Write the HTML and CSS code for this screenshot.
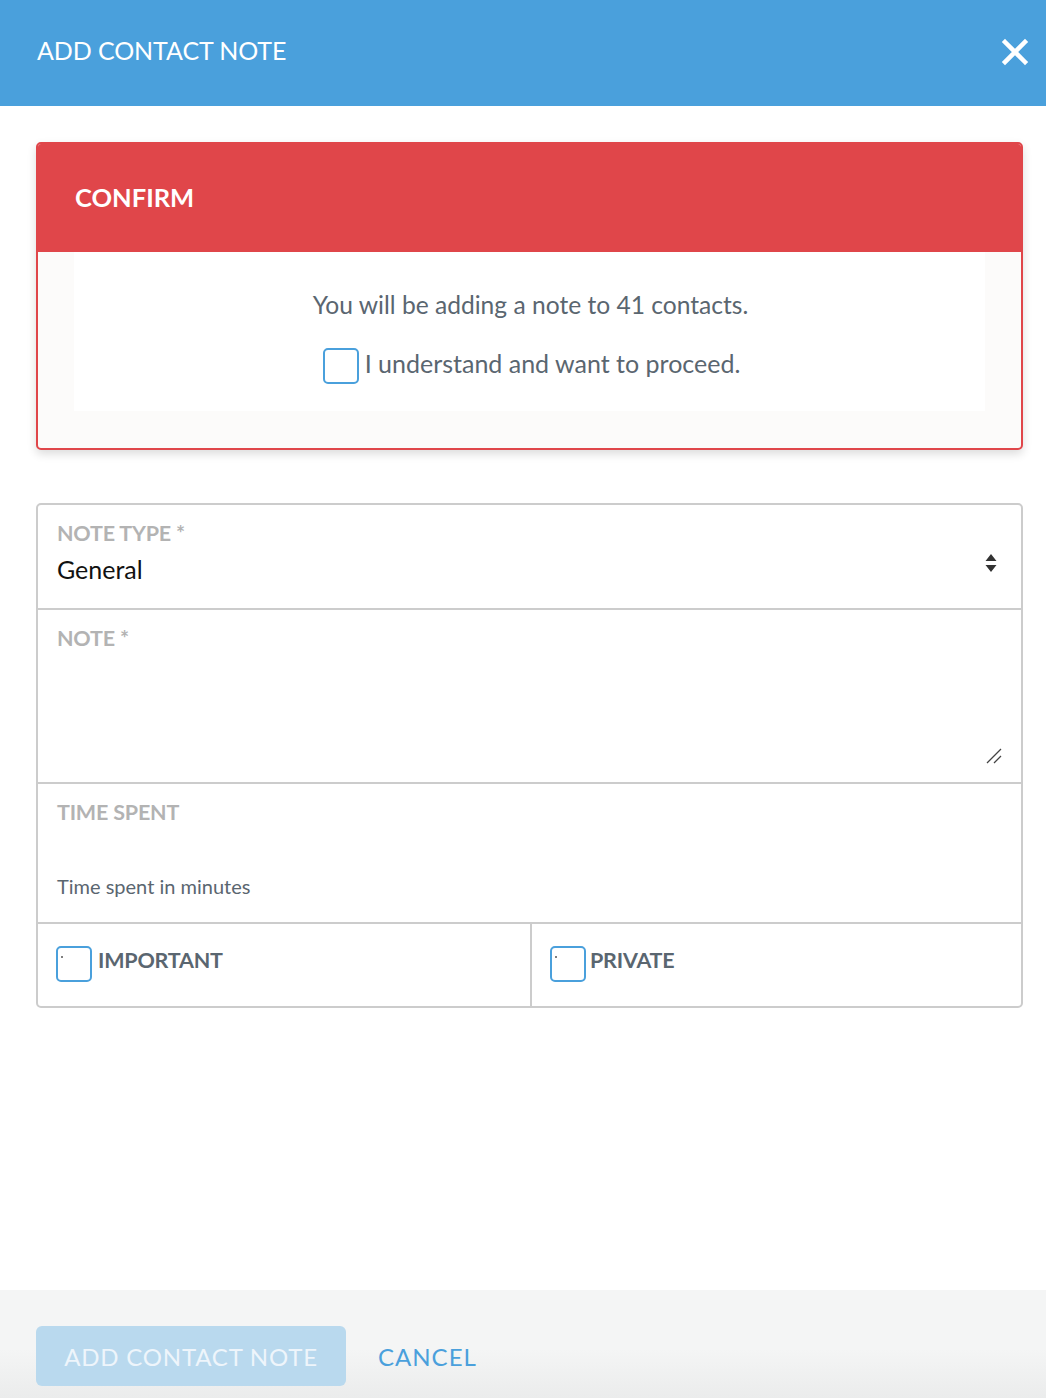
FILE: index.html
```html
<!DOCTYPE html>
<html>
<head>
<meta charset="utf-8">
<link rel="stylesheet" href="styles.css">
</head>
<body>
<div class="modal">
  <header class="topbar">
    <h1 class="title">ADD CONTACT NOTE</h1>
    <button class="close" aria-label="Close">
      <svg width="28" height="28" viewBox="0 0 28 28"><path d="M4 4 L24 24 M24 4 L4 24" stroke="#fff" stroke-width="4.5" stroke-linecap="square"/></svg>
    </button>
  </header>

  <main class="content">
    <section class="confirm">
      <div class="confirm-head">CONFIRM</div>
      <div class="confirm-body">
        <div class="confirm-inner">
          <p class="confirm-text">You will be adding a note to 41 contacts.</p>
          <label class="confirm-check"><span class="box"></span><span class="confirm-label">I understand and want to proceed.</span></label>
        </div>
      </div>
    </section>

    <section class="form">
      <div class="row row-type">
        <div class="label">NOTE TYPE *</div>
        <div class="select">
          <span class="value">General</span>
          <svg class="arrows" width="12" height="20" viewBox="0 0 12 20"><path d="M6 1 L11.5 8 L0.5 8 Z M6 19 L11.5 12 L0.5 12 Z" fill="#333"/></svg>
        </div>
      </div>
      <div class="row row-note">
        <div class="label">NOTE *</div>
        <svg class="resize" width="16" height="16" viewBox="0 0 16 16"><path d="M1 15 L15 1 M8 15 L15 8" stroke="#444" stroke-width="1.3"/></svg>
      </div>
      <div class="row row-time">
        <div class="label">TIME SPENT</div>
        <div class="placeholder">Time spent in minutes</div>
      </div>
      <div class="row row-checks">
        <label class="check-cell"><span class="box small-dot"></span><span class="check-label">IMPORTANT</span></label>
        <label class="check-cell"><span class="box small-dot"></span><span class="check-label">PRIVATE</span></label>
      </div>
    </section>
  </main>

  <footer class="footer">
    <button class="primary">ADD CONTACT NOTE</button>
    <button class="cancel">CANCEL</button>
  </footer>
</div>
</body>
</html>
```
FILE: styles.css
```css
* { box-sizing: border-box; }
html, body { margin: 0; padding: 0; }
body {
  font-family: Lato, "Open Sans", "Liberation Sans", sans-serif;
  background: #fff;
  width: 1046px;
  height: 1398px;
  overflow: hidden;
}
.modal {
  display: flex;
  flex-direction: column;
  height: 1398px;
}
.topbar {
  height: 106px;
  background: #4aa0dc;
  display: flex;
  align-items: center;
  justify-content: space-between;
  padding: 0 17px 6px 37px;
}
.title {
  margin: 0;
  color: #fff;
  font-weight: 400;
  font-size: 25px;
  letter-spacing: -0.1px;
}
.close {
  background: none;
  border: 0;
  padding: 0;
  width: 28px;
  height: 28px;
  margin-top: 4px;
}
.content {
  flex: 1;
  padding: 36px 23px 0 36px;
}
.confirm {
  border: 2px solid #e0464a;
  border-radius: 5px;
  background: #fcfbfa;
  box-shadow: 0 4px 10px rgba(0,0,0,0.14);
  overflow: hidden;
}
.confirm-head {
  background: #e0464a;
  color: #fff;
  font-weight: 700;
  font-size: 25.5px;
  height: 110px;
  display: flex;
  align-items: center;
  padding-left: 39px;
  margin: -2px -2px 0 -2px;
  padding-top: 0;
}
.confirm-body {
  padding: 0 36px 37px 36px;
}
.confirm-inner {
  background: #fff;
  height: 159px;
  display: flex;
  flex-direction: column;
  align-items: center;
  padding-top: 36px;
}
.confirm-text {
  margin: 0;
  font-size: 24.6px;
  color: #5a6670;
  line-height: 34px;
  margin-left: 2px;
}
.confirm-check {
  display: flex;
  align-items: flex-start;
  gap: 6px;
  margin-top: 26px;
  font-size: 25px;
  color: #5a6670;
  margin-left: 4px;
}
.confirm-label { line-height: 30px; }
.box {
  display: inline-block;
  width: 36px;
  height: 36px;
  border: 2px solid #4aa0dc;
  border-radius: 5px;
  background: #fff;
  position: relative;
  flex: none;
}
.small-dot::after {
  content: "";
  position: absolute;
  left: 3px;
  top: 8px;
  width: 2px;
  height: 2px;
  background: #555;
  border-radius: 1px;
}
.form {
  margin-top: 53px;
  border: 2px solid #cccccc;
  border-radius: 5px;
}
.row {
  border-bottom: 2px solid #cccccc;
  padding: 0 19px;
  position: relative;
}
.row:last-child { border-bottom: 0; }
.label {
  color: #b3b3b3;
  font-weight: 700;
  font-size: 21.5px;
  letter-spacing: -0.2px;
  line-height: 26px;
}
.row-type { height: 105px; padding-top: 15px; }
.select {
  display: flex;
  justify-content: space-between;
  align-items: center;
  margin-top: 8px;
}
.value { font-size: 25px; color: #111; }
.arrows { margin-right: 5px; margin-top: -12px; }
.row-note { height: 174px; padding-top: 15px; }
.resize { position: absolute; right: 19px; bottom: 18px; }
.row-time { height: 140px; padding-top: 15px; }
.placeholder {
  margin-top: 49px;
  font-size: 20px;
  color: #5a6670;
}
.row-checks {
  display: grid;
  grid-template-columns: 492px 1fr;
  padding: 0;
  height: 82px;
}
.check-cell {
  display: flex;
  align-items: flex-start;
  gap: 6px;
  padding: 22px 0 0 18px;
}
.check-cell + .check-cell { border-left: 2px solid #cccccc; }
.check-label {
  font-weight: 700;
  font-size: 21.5px;
  color: #5a6670;
  letter-spacing: -0.2px;
  margin-top: 1px;
}
.check-cell + .check-cell .check-label { margin-left: -2px; }
.footer {
  height: 108px;
  background: linear-gradient(#f4f5f5 0%, #f4f5f5 55%, #ebecec 100%);
  display: flex;
  align-items: center;
  padding: 0 36px;
  gap: 32px;
}
.primary {
  font-family: inherit;
  width: 310px;
  height: 60px;
  border: 0;
  border-radius: 6px;
  background: #b9d9ee;
  color: #eef5fb;
  font-size: 24px;
  letter-spacing: 0.8px;
  margin-top: 24px;
  margin-bottom: 0;
}
.cancel {
  font-family: inherit;
  background: none;
  border: 0;
  padding: 0;
  color: #4aa0dc;
  font-size: 24px;
  letter-spacing: 1px;
  margin-top: 24px;
}
```
